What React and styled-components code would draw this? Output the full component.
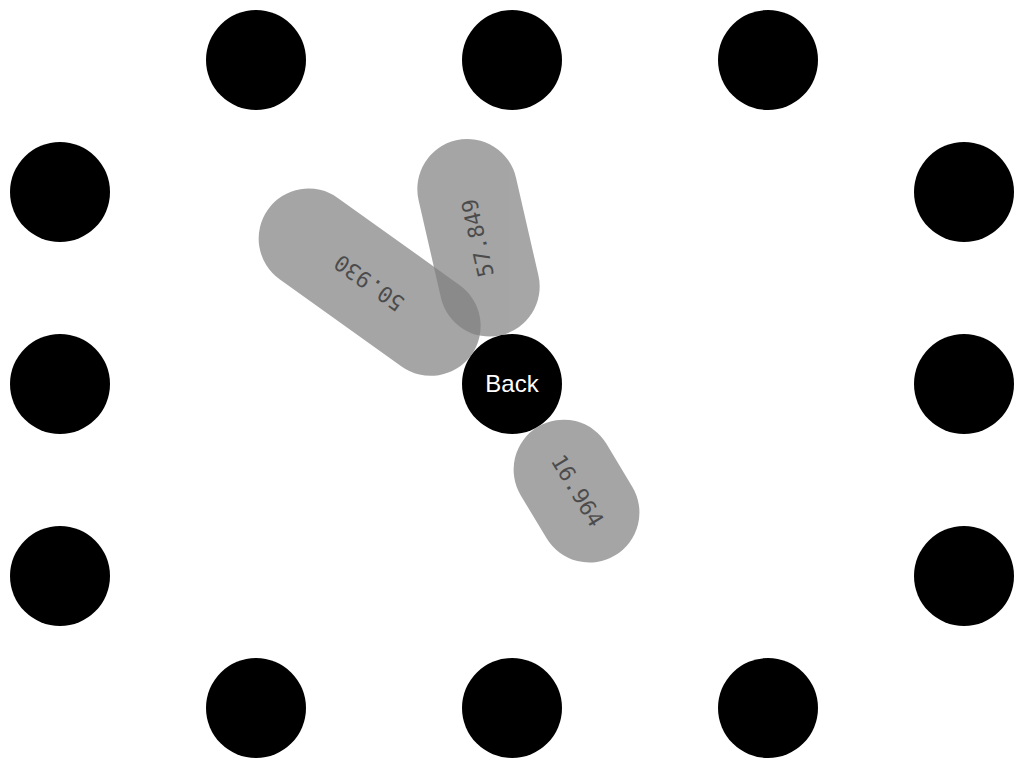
import React from "react";
import styled, { createGlobalStyle } from "styled-components";

const Global = createGlobalStyle`
  html, body { margin: 0; padding: 0; background: #ffffff; }
  body { width: 1024px; height: 768px; overflow: hidden; }
`;

const Face = styled.div`
  box-sizing: border-box;
  width: 1024px;
  height: 768px;
  padding: 10px;
  display: grid;
  grid-template-columns: 100px 96px 100px 156px 100px 156px 100px 96px 100px;
  grid-template-rows: 100px 32px 100px 92px 100px 92px 100px 32px 100px;
`;

const Marker = styled.div`
  grid-column: ${(p) => p.$col};
  grid-row: ${(p) => p.$row};
  width: 100px;
  height: 100px;
  border-radius: 50%;
  background: #000000;
`;

const CenterCell = styled.div`
  grid-column: 5;
  grid-row: 5;
  position: relative;
  width: 100px;
  height: 100px;
`;

const HandPivot = styled.div`
  position: absolute;
  left: 50px;
  top: 50px;
  width: 0;
  height: 0;
`;

const Hand = styled.div`
  position: absolute;
  left: -50px;
  bottom: 50px;
  width: 100px;
  height: ${(p) => p.$length}px;
  border-radius: 50px;
  background: #808080;
  opacity: 0.7;
  transform-origin: 50% calc(100% + 50px);
  transform: rotate(${(p) => p.$angle}deg);
  display: flex;
  align-items: center;
  justify-content: center;
`;

const HandLabel = styled.span`
  display: block;
  transform: rotate(-90deg);
  white-space: nowrap;
  font-family: "DejaVu Sans Mono", "Liberation Mono", monospace;
  font-size: 22px;
  line-height: 1;
  color: #000000;
`;

const BackButton = styled.button`
  position: relative;
  box-sizing: border-box;
  width: 100px;
  height: 100px;
  margin: 0;
  padding: 0;
  border: none;
  border-radius: 50%;
  background: #000000;
  color: #ffffff;
  font-family: "Liberation Sans", Arial, sans-serif;
  font-size: 24px;
  display: flex;
  align-items: center;
  justify-content: center;
  cursor: pointer;
`;

const markers = [
  { col: 3, row: 1 },
  { col: 5, row: 1 },
  { col: 7, row: 1 },
  { col: 9, row: 3 },
  { col: 9, row: 5 },
  { col: 9, row: 7 },
  { col: 7, row: 9 },
  { col: 5, row: 9 },
  { col: 3, row: 9 },
  { col: 1, row: 7 },
  { col: 1, row: 5 },
  { col: 1, row: 3 },
];

const seconds = 50.93;
const minutes = 57 + seconds / 60;
const hours = 16 + minutes / 60;

const hands = [
  { key: "s", value: seconds.toFixed(3), length: 250, angle: (seconds / 60) * 360 },
  { key: "m", value: minutes.toFixed(3), length: 200, angle: (minutes / 60) * 360 },
  { key: "h", value: hours.toFixed(3), length: 150, angle: ((hours % 12) / 12) * 360 },
];

export default function App() {
  return (
    <>
      <Global />
      <Face>
        {markers.map((m, i) => (
          <Marker key={i} $col={m.col} $row={m.row} />
        ))}
        <CenterCell>
          <HandPivot>
            {hands.map((h) => (
              <Hand key={h.key} $length={h.length} $angle={h.angle}>
                <HandLabel>{h.value}</HandLabel>
              </Hand>
            ))}
          </HandPivot>
          <BackButton>Back</BackButton>
        </CenterCell>
      </Face>
    </>
  );
}
